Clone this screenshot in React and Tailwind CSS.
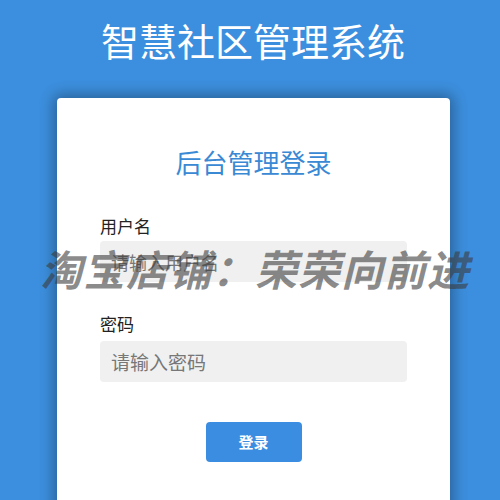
export default function App() {
  return (
    <div
      className="relative w-[500px] h-[500px] overflow-hidden bg-[#3c8fde]"
      style={{ fontFamily: '"Noto Sans CJK SC", "Noto Sans", sans-serif' }}
    >
      <h1 className="pt-[14px] pl-[6px] text-center text-[38px] leading-[52px] text-white">智慧社区管理系统</h1>

      <div className="ml-[57px] mt-[32px] w-[393px] h-[420px] rounded-[4px] bg-white px-[43px] pt-[47px] shadow-[0_0_14px_4px_rgba(0,0,0,0.3)]">
        <h2 className="text-center text-[26px] leading-[34px] text-[#3a89d4]">后台管理登录</h2>

        <div className="mt-[35px] text-[17px] leading-[24px] text-[#222]">用户名</div>
        <input
          className="mt-[3px] block w-full h-[41px] rounded-[4px] bg-[#f0f0f0] px-[11px] text-[18px] text-[#333] placeholder:text-[#777] outline-none"
          placeholder="请输入用户名"
        />

        <div className="mt-[30px] text-[17px] leading-[24px] text-[#222]">密码</div>
        <input
          type="text"
          className="mt-[5px] block w-full h-[41px] rounded-[4px] bg-[#f0f0f0] px-[11px] text-[19px] text-[#333] placeholder:text-[#777] outline-none"
          placeholder="请输入密码"
        />

        <div className="mt-[40px] flex justify-center">
          <button className="w-[96px] h-[40px] rounded-[4px] bg-[#3a8de0] text-[15px] font-bold text-white">登录</button>
        </div>
      </div>

      <div className="pointer-events-none absolute left-[40px] top-[243px] text-[42px] leading-[50px] tracking-[1px] font-bold italic whitespace-nowrap text-[rgba(60,60,60,0.6)]">
        淘宝店铺：荣荣向前进
      </div>
    </div>
  );
}
